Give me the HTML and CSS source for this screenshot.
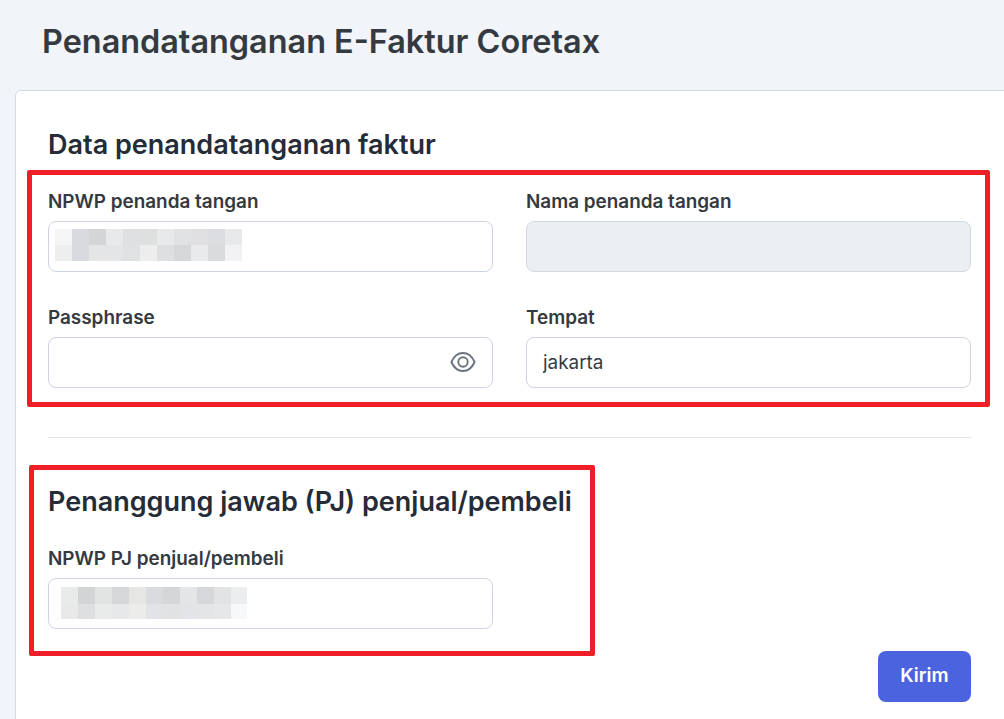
FILE: index.html
```html
<!DOCTYPE html>
<html lang="id">
<head>
<meta charset="utf-8">
<title>Penandatanganan E-Faktur Coretax</title>
<link rel="stylesheet" href="styles.css">
</head>
<body>
<h1 class="page-title">Penandatanganan E-Faktur Coretax</h1>
<main class="card">
  <form class="form">
    <h2 class="section-title">Data penandatanganan faktur</h2>
    <div class="field-grid">
      <div class="field">
        <label class="field-label" for="npwp">NPWP penanda tangan</label>
        <div class="input-wrap">
          <input class="input" id="npwp" type="text">
          <svg class="mosaic mosaic-a" width="187" height="32" viewBox="0 0 187 32" aria-hidden="true">
            <rect x="0" y="0" width="17" height="16" fill="#f5f5f5"/><rect x="17" y="0" width="17" height="16" fill="#d9dadd"/><rect x="34" y="0" width="17" height="16" fill="#d4d5d7"/><rect x="51" y="0" width="17" height="16" fill="#e8e9e9"/><rect x="68" y="0" width="17" height="16" fill="#dfe0e1"/><rect x="85" y="0" width="17" height="16" fill="#dedfdf"/><rect x="102" y="0" width="17" height="16" fill="#e8e9ea"/><rect x="119" y="0" width="17" height="16" fill="#e0e1e3"/><rect x="136" y="0" width="17" height="16" fill="#e0e0e3"/><rect x="153" y="0" width="17" height="16" fill="#dcdde0"/><rect x="170" y="0" width="17" height="16" fill="#e8e9eb"/>
            <rect x="0" y="16" width="17" height="16" fill="#eeeeee"/><rect x="17" y="16" width="17" height="16" fill="#d9dade"/><rect x="34" y="16" width="17" height="16" fill="#e4e5e4"/><rect x="51" y="16" width="17" height="16" fill="#e4e5e6"/><rect x="68" y="16" width="17" height="16" fill="#e0e1e2"/><rect x="85" y="16" width="17" height="16" fill="#ecedec"/><rect x="102" y="16" width="17" height="16" fill="#dedfe1"/><rect x="119" y="16" width="17" height="16" fill="#d6d7d9"/><rect x="136" y="16" width="17" height="16" fill="#e9eaec"/><rect x="153" y="16" width="17" height="16" fill="#dadbdd"/><rect x="170" y="16" width="17" height="16" fill="#f2f2f4"/>
          </svg>
        </div>
      </div>
      <div class="field">
        <label class="field-label" for="nama">Nama penanda tangan</label>
        <input class="input input-disabled" id="nama" type="text" disabled>
      </div>
      <div class="field">
        <label class="field-label" for="pass">Passphrase</label>
        <div class="input-wrap">
          <input class="input" id="pass" type="password">
          <svg class="eye" width="26" height="22" viewBox="0 0 26 22" fill="none" stroke="#6b7280" stroke-width="1.9" aria-hidden="true">
            <path d="M1.4 11C3.6 6 7.6 2 13 2S22.400 6 24.600 11C22.400 16 18.400 20 13 20S3.600 16 1.400 11Z" stroke-linejoin="round"/>
            <circle cx="13" cy="11" r="4.700"/>
          </svg>
        </div>
      </div>
      <div class="field">
        <label class="field-label" for="tempat">Tempat</label>
        <input class="input" id="tempat" type="text" value="jakarta">
      </div>
    </div>
    <hr class="divider">
    <h2 class="section-title">Penanggung jawab (PJ) penjual/pembeli</h2>
    <div class="field-grid">
      <div class="field">
        <label class="field-label" for="npwp-pj">NPWP PJ penjual/pembeli</label>
        <div class="input-wrap">
          <input class="input" id="npwp-pj" type="text">
          <svg class="mosaic mosaic-b" width="186" height="32" viewBox="0 0 186 32" aria-hidden="true">
            <rect x="0" y="0" width="17" height="17" fill="#e9ebea"/><rect x="17" y="0" width="17" height="17" fill="#d3d4d6"/><rect x="34" y="0" width="17" height="17" fill="#e2e3e3"/><rect x="51" y="0" width="17" height="17" fill="#d6d7d9"/><rect x="68" y="0" width="17" height="17" fill="#e6e6e5"/><rect x="85" y="0" width="17" height="17" fill="#dadbdf"/><rect x="102" y="0" width="17" height="17" fill="#d5d6d8"/><rect x="119" y="0" width="17" height="17" fill="#e4e5e7"/><rect x="136" y="0" width="17" height="17" fill="#d6d7da"/><rect x="153" y="0" width="17" height="17" fill="#e3e3e3"/><rect x="170" y="0" width="16" height="17" fill="#ecedef"/>
            <rect x="0" y="17" width="17" height="15" fill="#e9e9e9"/><rect x="17" y="17" width="17" height="15" fill="#dedfe1"/><rect x="34" y="17" width="17" height="15" fill="#e9ebea"/><rect x="51" y="17" width="17" height="15" fill="#e7e8ea"/><rect x="68" y="17" width="17" height="15" fill="#ecedea"/><rect x="85" y="17" width="17" height="15" fill="#e2e3e7"/><rect x="102" y="17" width="17" height="15" fill="#e1e2e4"/><rect x="119" y="17" width="17" height="15" fill="#e3e4e7"/><rect x="136" y="17" width="17" height="15" fill="#e4e5e7"/><rect x="153" y="17" width="17" height="15" fill="#e7e7e7"/><rect x="170" y="17" width="16" height="15" fill="#f7f8fa"/>
          </svg>
        </div>
      </div>
    </div>
    <div class="actions">
      <button class="button-primary" type="button">Kirim</button>
    </div>
  </form>
</main>
<div class="annotation annotation-signer"></div>
<div class="annotation annotation-pj"></div>
</body>
</html>
```
FILE: styles.css
```css
* { box-sizing: border-box; }
html, body { height: 100%; overflow: hidden; }
body {
  margin: 0;
  padding: 0 0 0 15px;
  background: #f1f4f9;
  color: #252b37;
  font-family: Inter, "Liberation Sans", sans-serif;
  position: relative;
}
.page-title {
  margin: 0;
  padding: 22px 0 0 27px;
  height: 90px;
  font-size: 32.4px;
  line-height: 39px;
  font-weight: 600;
  color: #343a40;
}
.card {
  width: 1010px;
  height: 660px;
  background: #fff;
  border: 1px solid #d3d9e4;
  border-radius: 6px;
  padding: 38px 0 0 32px;
}
.form { width: 923px; }
.section-title {
  margin: 0;
  font-size: 27px;
  line-height: 32px;
  font-weight: 600;
}
.field-grid {
  display: grid;
  grid-template-columns: 445px 445px;
  column-gap: 33px;
  row-gap: 35px;
  margin-top: 30px;
}
.field { display: flex; flex-direction: column; gap: 8px; }
.field-label {
  font-size: 18.9px;
  line-height: 22px;
  font-weight: 600;
  color: #343a40;
}
.input-wrap { position: relative; }
.input {
  display: block;
  width: 100%;
  height: 51px;
  padding: 0 16px;
  border: 1px solid #ced4e0;
  border-radius: 8px;
  background: #fff;
  color: #343a40;
  font: 400 18.9px Inter, "Liberation Sans", sans-serif;
  outline: none;
}
.input-disabled { background: #ecEff2; border-color: #d5d9de; }
.mosaic { position: absolute; display: block; top: 8px; }
.mosaic-a { left: 7px; }
.mosaic-b { left: 13px; top: 9px; }
.eye { position: absolute; right: 17px; top: 14px; }
.divider {
  margin: 49px 0 0;
  border: 0;
  border-top: 1px solid #e1e3e7;
}
.divider + .section-title { margin-top: 48px; }
.actions { display: flex; justify-content: flex-end; margin-top: 22px; }
.button-primary {
  width: 93px;
  height: 51px;
  padding: 0 0 3px;
  border: 0;
  border-radius: 8px;
  background: #4c63df;
  color: #fff;
  font: 600 19px Inter, "Liberation Sans", sans-serif;
}
.annotation {
  position: absolute;
  border: 5px solid #ee1f29;
  border-radius: 2px;
}
.annotation-signer { left: 27px; top: 170px; width: 963px; height: 237px; }
.annotation-pj { left: 29px; top: 465px; width: 566px; height: 191px; }
```
